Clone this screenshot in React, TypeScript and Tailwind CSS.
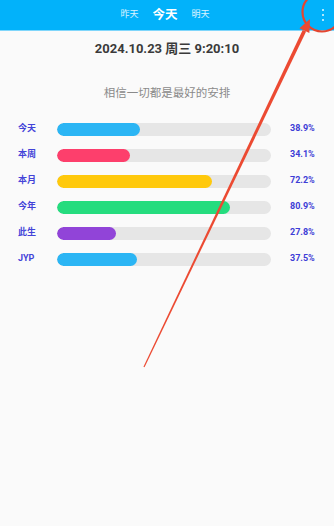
import {FC} from "react";

const rows = [
    {label: "今天", value: 38.9, color: "bg-[#2bb5f4]"},
    {label: "本周", value: 34.1, color: "bg-[#fd3f6c]"},
    {label: "本月", value: 72.2, color: "bg-[#ffc90c]"},
    {label: "今年", value: 80.9, color: "bg-[#25dc7e]"},
    {label: "此生", value: 27.8, color: "bg-[#9144d8]"},
    {label: "JYP", value: 37.5, color: "bg-[#2bb5f4]"},
];

// red annotation drawn over the screenshot
const Annotation: FC = () => {
    const tail = {x: 144, y: 367};
    const tip = {x: 310, y: 19};
    const dx = tip.x - tail.x;
    const dy = tip.y - tail.y;
    const len = Math.hypot(dx, dy);
    const ux = dx / len, uy = dy / len;
    const nx = -uy, ny = ux;
    const head = 13;
    const bx = tip.x - ux * head, by = tip.y - uy * head;
    const w0 = 0.6, w1 = 1.9;
    const shaft = [
        [tail.x + nx * w0, tail.y + ny * w0],
        [bx + nx * w1, by + ny * w1],
        [bx - nx * w1, by - ny * w1],
        [tail.x - nx * w0, tail.y - ny * w0],
    ].map(p => p.join(",")).join(" ");
    const arrow = [
        [tip.x, tip.y],
        [bx + nx * 5.5, by + ny * 5.5],
        [bx - nx * 5.5, by - ny * 5.5],
    ].map(p => p.join(",")).join(" ");

    return (
        <svg className="absolute inset-0 pointer-events-none" width={334} height={526} viewBox="0 0 334 526">
            <circle cx={322} cy={12} r={19.5} fill="none" stroke="#e5452f" strokeWidth={2.2}/>
            <polygon points={shaft} fill="#ec4a32"/>
            <polygon points={arrow} fill="#ec4a32"/>
        </svg>
    );
};

const App: FC = () => {
    return (
        <div className="relative w-[334px] h-[526px] overflow-hidden bg-[#fafafa] font-['Roboto','Noto_Sans_CJK_SC',sans-serif]">
            <div className="grid grid-cols-[1fr_auto_1fr] items-center h-[31px] bg-[#02b2fa] border-b border-[#7fd6fb]">
                <div/>
                <div className="flex items-center gap-[14px] pr-[4px] text-white">
                    <span className="text-[9px] text-white/85">昨天</span>
                    <span className="text-[12.5px] font-bold">今天</span>
                    <span className="text-[9px] text-white/85">明天</span>
                </div>
                <div className="flex justify-end pr-[10px]">
                    <div className="flex flex-col gap-[2.5px] items-center">
                        <span className="w-[2.5px] h-[2.5px] rounded-full bg-white/90"/>
                        <span className="w-[2.5px] h-[2.5px] rounded-full bg-white/90"/>
                        <span className="w-[2.5px] h-[2.5px] rounded-full bg-white/90"/>
                    </div>
                </div>
            </div>

            <p className="mt-[10px] text-center text-[13px] leading-[16px] font-bold text-[#3a3a3a]">
                2024.10.23 周三 9:20:10
            </p>
            <p className="mt-[29px] text-center text-[11.5px] leading-[14px] text-[#8a8a8a]">
                相信一切都是最好的安排
            </p>

            <div className="mt-[16px] flex flex-col">
                {rows.map(row => (
                    <div key={row.label} className="flex items-center h-[26px] pl-[18px]">
                        <span className="w-[39px] text-[9px] font-bold text-[#4343d8]">{row.label}</span>
                        <div className="w-[214px] h-[13px] rounded-full bg-[#e6e6e6] overflow-hidden">
                            <div className={`h-full rounded-full ${row.color}`}
                                 style={{width: `${row.value}%`}}/>
                        </div>
                        <span className="ml-[19px] text-[9px] font-bold text-[#3d3dd6]">{row.value.toFixed(1)}%</span>
                    </div>
                ))}
            </div>

            <Annotation/>
        </div>
    )
}

export default App
